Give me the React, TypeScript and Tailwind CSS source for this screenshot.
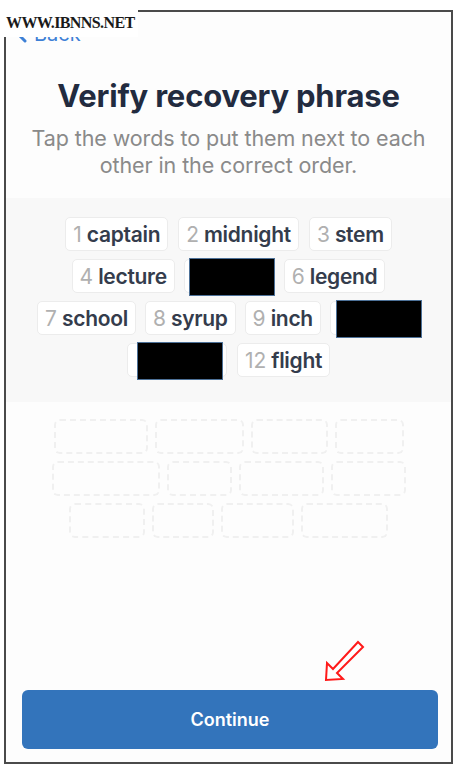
import React from "react";

const font = { fontFamily: "Inter, 'Noto Sans', sans-serif" };

function Chip({ n, word }: { n: number; word: string }) {
  return (
    <div className="flex h-[34px] items-center rounded-[5px] border border-[#ececec] bg-white px-[7px] text-[21px] leading-none">
      <span className="mr-[5px] font-normal text-[#b0b0b0]">{n}</span>
      <span className="font-semibold tracking-[-0.3px] text-[#343c4c]">{word}</span>
    </div>
  );
}

function Hidden({ w, left, box }: { w: number; left: number; box: number }) {
  return (
    <div className="relative h-[34px] rounded-[5px] border border-[#ececec] bg-white" style={{ width: w }}>
      <div
        className="absolute -top-[2px] h-[38px] border border-[#4d7198] bg-black"
        style={{ left, width: box }}
      />
    </div>
  );
}

function Slot({ w }: { w: number }) {
  return <div className="h-[35px] rounded-[6px] border-2 border-dashed border-[#f0f0f0]" style={{ width: w }} />;
}

export default function App() {
  return (
    <div className="relative h-[768px] w-[456px] overflow-hidden bg-white" style={font}>
      <div className="absolute left-0 top-[7px] z-10 bg-white pl-[6px] pr-[3px] pt-[3px] pb-[3px]">
        <span
          className="text-[16px] font-bold leading-none tracking-[-0.6px] text-[#1a1a1a]"
          style={{ fontFamily: "'Liberation Serif', 'DejaVu Serif', serif" }}
        >
          WWW.IBNNS.NET
        </span>
      </div>

      <div className="ml-[4px] mt-[10px] flex h-[754px] w-[449px] flex-col border-2 border-[#4a4a4a] bg-[#fdfdfd]">
        <div className="flex h-[32px] items-end pl-[8px]">
          <svg width="14" height="20" viewBox="0 0 14 20" className="mb-[1px]">
            <path d="M11 2 L3 10 L11 18" fill="none" stroke="#3d80d6" strokeWidth="3" strokeLinecap="round" strokeLinejoin="round" />
          </svg>
          <span className="ml-[6px] text-[20px] leading-none text-[#3d80d6]">Back</span>
        </div>

        <h1 className="mt-[36px] text-center text-[31px] font-bold leading-none tracking-[-0.2px] text-[#222b3f]">
          Verify recovery phrase
        </h1>
        <p className="mt-[14px] px-[2px] text-center text-[21.5px] leading-[27px] tracking-[-0.1px] text-[#8a8a8a]">
          Tap the words to put them next to each
          <br />
          other in the correct order.
        </p>

        <div className="mt-[19px] flex h-[204px] flex-col items-center gap-[8px] bg-[#f8f8f8] pt-[19px]">
          <div className="flex gap-[10px]">
            <Chip n={1} word="captain" />
            <Chip n={2} word="midnight" />
            <Chip n={3} word="stem" />
          </div>
          <div className="flex gap-[9px]">
            <Chip n={4} word="lecture" />
            <Hidden w={91} left={4} box={86} />
            <Chip n={6} word="legend" />
          </div>
          <div className="flex gap-[9px]">
            <Chip n={7} word="school" />
            <Chip n={8} word="syrup" />
            <Chip n={9} word="inch" />
            <Hidden w={90} left={5} box={86} />
          </div>
          <div className="flex gap-[10px]">
            <Hidden w={100} left={9} box={86} />
            <Chip n={12} word="flight" />
          </div>
        </div>

        <div className="mt-[17px] flex flex-col items-center gap-[7px]">
          <div className="flex gap-[7px]">
            <Slot w={94} />
            <Slot w={89} />
            <Slot w={77} />
            <Slot w={69} />
          </div>
          <div className="flex gap-[7px]">
            <Slot w={108} />
            <Slot w={65} />
            <Slot w={85} />
            <Slot w={75} />
          </div>
          <div className="flex gap-[7px]">
            <Slot w={76} />
            <Slot w={62} />
            <Slot w={73} />
            <Slot w={87} />
          </div>
        </div>

        <div className="relative mt-auto mb-[13px] ml-[16px] mr-[13px]">
          <svg width="44" height="44" viewBox="0 0 44 44" className="absolute -top-[50px] right-[72px]">
            <path
              d="M36 2 L41 7 L15 33 L21 39 L4 40 L5 23 L11 29 Z"
              fill="white"
              stroke="#ff1a1a"
              strokeWidth="2"
              strokeLinejoin="miter"
            />
          </svg>
          <button className="flex h-[59px] w-full items-center justify-center rounded-[6px] bg-[#3374bb] text-[18px] font-semibold text-white">
            Continue
          </button>
        </div>
      </div>
    </div>
  );
}
